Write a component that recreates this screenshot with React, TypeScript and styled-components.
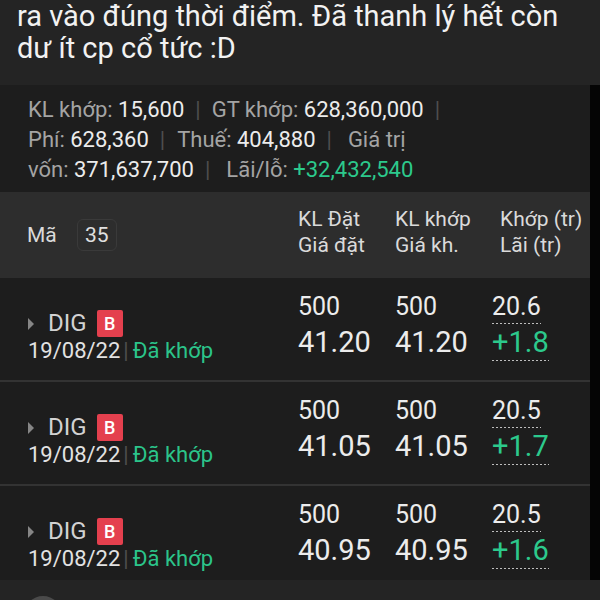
import React from "react";
import styled, { createGlobalStyle } from "styled-components";

const Global = createGlobalStyle`
  html, body { margin: 0; padding: 0; }
  body {
    background: #242424;
    font-family: Roboto, "Noto Sans", "DejaVu Sans", sans-serif;
    width: 600px;
    height: 600px;
    overflow: hidden;
  }
`;

const Page = styled.div`
  display: flex;
  flex-direction: column;
  width: 600px;
`;

const PostText = styled.p`
  margin: 0;
  padding: 0 17px;
  font-size: 29px;
  line-height: 32px;
  color: #f2f2f2;
  white-space: nowrap;
`;

const Frame = styled.div`
  margin-top: 21px;
  display: flex;
  background: #050505;
  width: 600px;
`;

const Card = styled.div`
  width: 590px;
  background: #1d1d1d;
  display: flex;
  flex-direction: column;
`;

const Stats = styled.div`
  padding: 10px 0 7px 28px;
  font-size: 22px;
  line-height: 30px;
`;

const StatLine = styled.div`
  white-space: nowrap;
`;

const Label = styled.span`
  color: #a4a4a4;
`;

const Value = styled.span<{ $green?: boolean }>`
  color: ${(p) => (p.$green ? "#2cc98c" : "#ececec")};
`;

const Sep = styled.span<{ $r?: number }>`
  color: #4e4e4e;
  margin-left: 11px;
  margin-right: ${(p) => p.$r ?? 11}px;
`;

const Grid = styled.div`
  display: grid;
  grid-template-columns: 298px 97px 97px 1fr;
`;

const Header = styled(Grid)`
  background: #2d2d2d;
  height: 86px;
  box-sizing: border-box;
  padding-top: 14px;
  color: #dadada;
  font-size: 21px;
  line-height: 26px;
`;

const HeadLeft = styled.div`
  display: flex;
  align-items: center;
  padding-left: 27px;
  align-self: start;
  margin-top: 13px;
`;

const CountBox = styled.span`
  margin-left: 20px;
  width: 40px;
  height: 32px;
  box-sizing: border-box;
  border: 1px solid #3a3a3a;
  border-radius: 6px;
  display: flex;
  align-items: center;
  justify-content: center;
  color: #e0e0e0;
`;

const HeadCol = styled.div<{ $shift?: number }>`
  display: flex;
  flex-direction: column;
  padding-left: ${(p) => p.$shift ?? 0}px;
  white-space: nowrap;
`;

const Row = styled(Grid)`
  height: 102px;
  border-bottom: 2px solid #333333;
  box-sizing: content-box;
  &:last-child {
    height: 94px;
    border-bottom: none;
  }
`;

const LeftCell = styled.div`
  padding: 31px 0 0 28px;
  display: flex;
  flex-direction: column;
`;

const SymbolLine = styled.div`
  display: flex;
  align-items: center;
  height: 29px;
`;

const Caret = styled.span`
  width: 0;
  height: 0;
  border-top: 6px solid transparent;
  border-bottom: 6px solid transparent;
  border-left: 6px solid #868686;
  margin-right: 14px;
`;

const Symbol = styled.span`
  font-size: 24px;
  color: #d2d2d2;
  line-height: 29px;
`;

const Side = styled.span`
  margin-left: 10px;
  width: 26px;
  height: 27px;
  border-radius: 2px;
  background: #e4404e;
  color: #ffffff;
  font-size: 18px;
  font-weight: 500;
  display: flex;
  align-items: center;
  justify-content: center;
`;

const DateLine = styled.div`
  font-size: 22px;
  line-height: 26px;
  color: #e2e2e2;
  white-space: nowrap;
`;

const DateSep = styled.span`
  color: #4e4e4e;
  margin: 0 4px 0 3px;
`;

const Status = styled.span`
  color: #2bc48a;
`;

const NumCell = styled.div`
  padding-top: 12px;
  display: flex;
  flex-direction: column;
  align-items: flex-start;
`;

const Small = styled.div<{ $dash?: boolean }>`
  font-size: 25px;
  line-height: 34px;
  height: 34px;
  color: #ececec;
  ${(p) =>
    p.$dash
      ? `background: repeating-linear-gradient(to right, #bdbdbd 0 2px, transparent 2px 4px) 0 33px / 100% 1px no-repeat;`
      : ""}
`;

const Big = styled.div<{ $dash?: boolean; $green?: boolean }>`
  font-size: 29px;
  line-height: 37px;
  height: 37px;
  color: ${(p) => (p.$green ? "#2cc98c" : "#ececec")};
  ${(p) =>
    p.$dash
      ? `background: repeating-linear-gradient(to right, #bdbdbd 0 2px, transparent 2px 4px) 0 36px / 100% 1px no-repeat;`
      : ""}
`;

const Avatar = styled.div`
  margin: 16px 0 0 24px;
  width: 38px;
  height: 38px;
  border-radius: 50%;
  background: #4a4a4a;
`;

type Order = {
  date: string;
  qty: string;
  price: string;
  value: string;
  pnl: string;
};

const orders: Order[] = [
  { date: "19/08/22", qty: "500", price: "41.20", value: "20.6", pnl: "+1.8" },
  { date: "19/08/22", qty: "500", price: "41.05", value: "20.5", pnl: "+1.7" },
  { date: "19/08/22", qty: "500", price: "40.95", value: "20.5", pnl: "+1.6" },
];

export default function App() {
  return (
    <Page>
      <Global />
      <PostText>
        ra vào đúng thời điểm. Đã thanh lý hết còn
        <br />
        dư ít cp cổ tức :D
      </PostText>
      <Frame>
        <Card>
          <Stats>
            <StatLine>
              <Label>KL khớp:</Label> <Value>15,600</Value>
              <Sep>|</Sep>
              <Label>GT khớp:</Label> <Value>628,360,000</Value>
              <Sep>|</Sep>
            </StatLine>
            <StatLine>
              <Label>Phí:</Label> <Value>628,360</Value>
              <Sep $r={12}>|</Sep>
              <Label>Thuế:</Label> <Value>404,880</Value>
              <Sep $r={16}>|</Sep>
              <Label>Giá trị</Label>
            </StatLine>
            <StatLine>
              <Label>vốn:</Label> <Value>371,637,700</Value>
              <Sep $r={16}>|</Sep>
              <Label>Lãi/lỗ:</Label> <Value $green>+32,432,540</Value>
            </StatLine>
          </Stats>
          <Header>
            <HeadLeft>
              <span>Mã</span>
              <CountBox>35</CountBox>
            </HeadLeft>
            <HeadCol>
              <span>KL Đặt</span>
              <span>Giá đặt</span>
            </HeadCol>
            <HeadCol>
              <span>KL khớp</span>
              <span>Giá kh.</span>
            </HeadCol>
            <HeadCol $shift={8}>
              <span>Khớp (tr)</span>
              <span>Lãi (tr)</span>
            </HeadCol>
          </Header>
          {orders.map((o, i) => (
            <Row key={i}>
              <LeftCell>
                <SymbolLine>
                  <Caret />
                  <Symbol>DIG</Symbol>
                  <Side>B</Side>
                </SymbolLine>
                <DateLine>
                  {o.date}
                  <DateSep>|</DateSep>
                  <Status>Đã khớp</Status>
                </DateLine>
              </LeftCell>
              <NumCell>
                <Small>{o.qty}</Small>
                <Big>{o.price}</Big>
              </NumCell>
              <NumCell>
                <Small>{o.qty}</Small>
                <Big>{o.price}</Big>
              </NumCell>
              <NumCell>
                <Small $dash>{o.value}</Small>
                <Big $dash $green>
                  {o.pnl}
                </Big>
              </NumCell>
            </Row>
          ))}
        </Card>
      </Frame>
      <Avatar />
    </Page>
  );
}
